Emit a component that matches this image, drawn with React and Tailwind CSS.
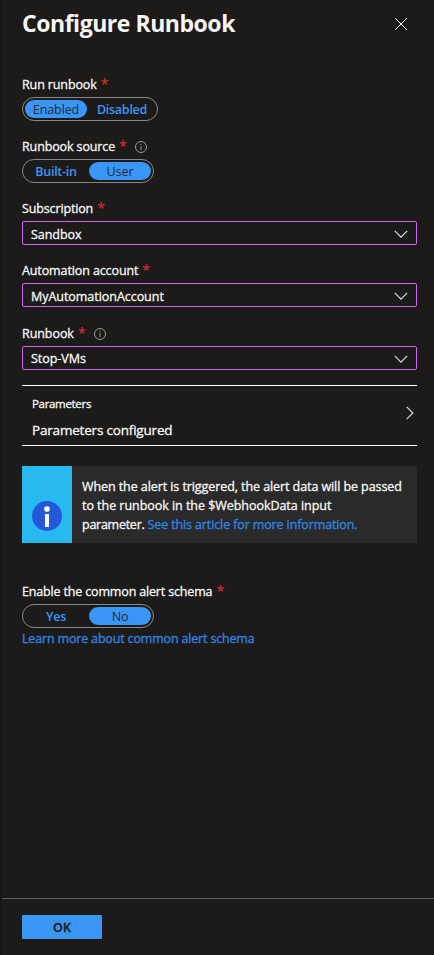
function Star() {
  return (
    <span className="ml-[4px] w-[6px] pb-px text-[14px] font-normal tracking-normal text-[#d92b2f] [-webkit-text-stroke:0.2px]">
      *
    </span>
  );
}

function InfoHint() {
  return (
    <svg className="ml-2.5 mt-0.5 size-3 shrink-0" viewBox="0 0 12 12" fill="none" stroke="#9a9998">
      <circle cx="6" cy="6" r="5.5" />
      <path d="M6 5v4M6 3v1" />
    </svg>
  );
}

function Label({ text, tracking, hint }) {
  return (
    <div className="flex h-[18px] items-center whitespace-nowrap">
      <span className={`pt-0.5 ${tracking}`}>{text}</span>
      <Star />
      {hint && <InfoHint />}
    </div>
  );
}

function Toggle({ options, selected, width }) {
  return (
    <div className={`mt-1 flex h-6 gap-0.5 rounded-full border border-[#8a8886] p-0.5 ${width}`}>
      {options.map((option, i) => (
        <button
          key={option.text}
          className={`flex h-[18px] items-center justify-center rounded-full pt-0.5 [-webkit-text-stroke:0px] ${
            option.wide ? "w-[66px]" : "w-[62px]"
          } ${
            i === selected
              ? "bg-[#3a96f5] tracking-[-0.1px] text-[#1b2a3a]"
              : "font-semibold tracking-[-0.25px] text-[#3a96f5]"
          }`}
        >
          {option.text}
        </button>
      ))}
    </div>
  );
}

function Select({ value, raised }) {
  return (
    <div className="mt-1 flex h-6 items-center justify-between rounded-[2px] border border-[#d864f5] px-2">
      <span className={`tracking-[-0.04px] ${raised ? "pt-px" : "pt-[3px]"}`}>{value}</span>
      <svg className="mt-0.5 h-2 w-[14px]" viewBox="0 0 14 8" fill="none" stroke="#e4e3e2" strokeWidth="1.1">
        <path d="M.8 .9 7 7.1 13.2 .9" />
      </svg>
    </div>
  );
}

export default function App() {
  return (
    <div className="flex h-[955px] w-[434px] flex-col overflow-hidden border-l-2 border-[#181715] bg-[#1c1b19] font-['Open_Sans','Noto_Sans',sans-serif] text-[12.5px] font-medium leading-[18px] text-[#f8f7f6] [-webkit-text-stroke:0.3px]">
      <header className="flex h-[75px] items-start justify-between pl-5 pr-[27px]">
        <h1 className="mt-[7px] whitespace-nowrap text-[23px] font-bold leading-8 tracking-[-0.46px] [-webkit-text-stroke:0px]">
          Configure Runbook
        </h1>
        <svg className="mt-[18px] size-3" viewBox="0 0 12 12" fill="none" stroke="#f0efee" strokeWidth="1">
          <path d="M0 0 12 12M12 0 0 12" />
        </svg>
      </header>

      <main className="flex-1 pl-5 pr-[17px]">
        <Label text="Run runbook" tracking="tracking-[-0.12px]" />
        <Toggle width="w-[136px]" selected={0} options={[{ text: "Enabled" }, { text: "Disabled", wide: true }]} />
        <div className="h-4" />
        <Label text="Runbook source" tracking="tracking-[-0.12px]" hint />
        <Toggle width="w-[132px]" selected={1} options={[{ text: "Built-in" }, { text: "User" }]} />
        <div className="h-4" />
        <Label text="Subscription" tracking="tracking-[-0.14px]" />
        <Select value="Sandbox" />
        <div className="h-4" />
        <Label text="Automation account" tracking="tracking-[-0.11px]" />
        <Select value="MyAutomationAccount" />
        <div className="h-[17px]" />
        <Label text="Runbook" tracking="tracking-[-0.06px]" hint />
        <Select value="Stop-VMs" raised />

        <section className="mt-[15px] flex h-[61px] items-center justify-between border-y border-white pl-2.5 pr-[3px]">
          <div className="flex flex-col gap-2 pt-0.5">
            <span className="text-[11.5px] tracking-[-0.32px]">Parameters</span>
            <span className="text-[13.5px] tracking-[-0.19px]">Parameters configured</span>
          </div>
          <svg className="-mt-1.5 h-[14px] w-2" viewBox="0 0 8 14" fill="none" stroke="#e4e3e2" strokeWidth="1.1">
            <path d="M.7 .8 6.9 7 .7 13.2" />
          </svg>
        </section>

        <section className="mt-5 flex h-[77px] bg-[#2a2a2a]">
          <div className="flex w-[50px] shrink-0 items-start justify-center bg-[#27b9f0] pt-[35px]">
            <svg className="size-[30px]" viewBox="0 0 30 30">
              <circle cx="15" cy="15" r="15" fill="#2558d9" />
              <circle cx="15" cy="8" r="2.8" fill="#fff" />
              <path d="M13 13h4v13h-4z" fill="#fff" />
            </svg>
          </div>
          <p className="whitespace-nowrap pl-2.5 pt-[11px] leading-[19px]">
            <span className="tracking-[-0.08px]">When the alert is triggered, the alert data will be passed</span>
            <br />
            <span className="tracking-[-0.04px]">to the runbook in the $WebhookData input</span>
            <br />
            <span className="tracking-[-0.26px]">parameter. </span>
            <a className="tracking-[-0.12px] text-[#2f86e4]">See this article for more information.</a>
          </p>
        </section>

        <div className="h-[39px]" />
        <Label text="Enable the common alert schema" tracking="tracking-[-0.16px]" />
        <Toggle width="w-[132px]" selected={1} options={[{ text: "Yes" }, { text: "No" }]} />
        <a className="mt-0.5 block whitespace-nowrap tracking-[-0.17px] text-[#2f86e4]">
          Learn more about common alert schema
        </a>
      </main>

      <footer className="h-[57px] border-t border-[#605e5c] pl-5 pt-4">
        <button className="flex h-6 w-20 items-center justify-center rounded-[1px] bg-[#3a96f5] pt-0.5 font-semibold text-[#1c1b19]">
          OK
        </button>
      </footer>
    </div>
  );
}
